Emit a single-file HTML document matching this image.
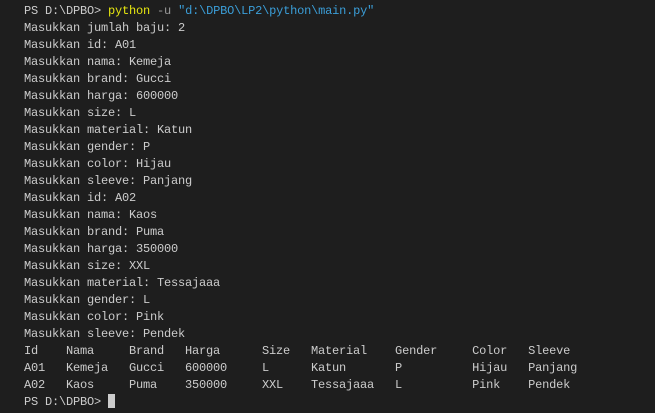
<!DOCTYPE html>
<html><head><meta charset="utf-8"><style>
html,body{margin:0;padding:0;background:#1e1e1e;width:655px;height:413px;overflow:hidden}
pre{margin:0;position:absolute;left:24px;top:3px;font-family:"Liberation Mono","DejaVu Sans Mono",monospace;font-size:12px;letter-spacing:-0.2px;line-height:17px;color:#cccccc}
.y{color:#e5e510}.g{color:#9a9a9a}.b{color:#3b9ed8}
.cur{display:inline-block;width:7px;height:14px;background:#cccccc;vertical-align:-3px}
</style></head><body><pre>PS D:\DPBO&gt; <span class="y">python</span> <span class="g">-u</span> <span class="b">"d:\DPBO\LP2\python\main.py"</span>
Masukkan jumlah baju: 2
Masukkan id: A01
Masukkan nama: Kemeja
Masukkan brand: Gucci
Masukkan harga: 600000
Masukkan size: L
Masukkan material: Katun
Masukkan gender: P
Masukkan color: Hijau
Masukkan sleeve: Panjang
Masukkan id: A02
Masukkan nama: Kaos
Masukkan brand: Puma
Masukkan harga: 350000
Masukkan size: XXL
Masukkan material: Tessajaaa
Masukkan gender: L
Masukkan color: Pink
Masukkan sleeve: Pendek
Id    Nama     Brand   Harga      Size   Material    Gender     Color   Sleeve
A01   Kemeja   Gucci   600000     L      Katun       P          Hijau   Panjang
A02   Kaos     Puma    350000     XXL    Tessajaaa   L          Pink    Pendek
PS D:\DPBO&gt; <span class="cur"></span></pre></body></html>
